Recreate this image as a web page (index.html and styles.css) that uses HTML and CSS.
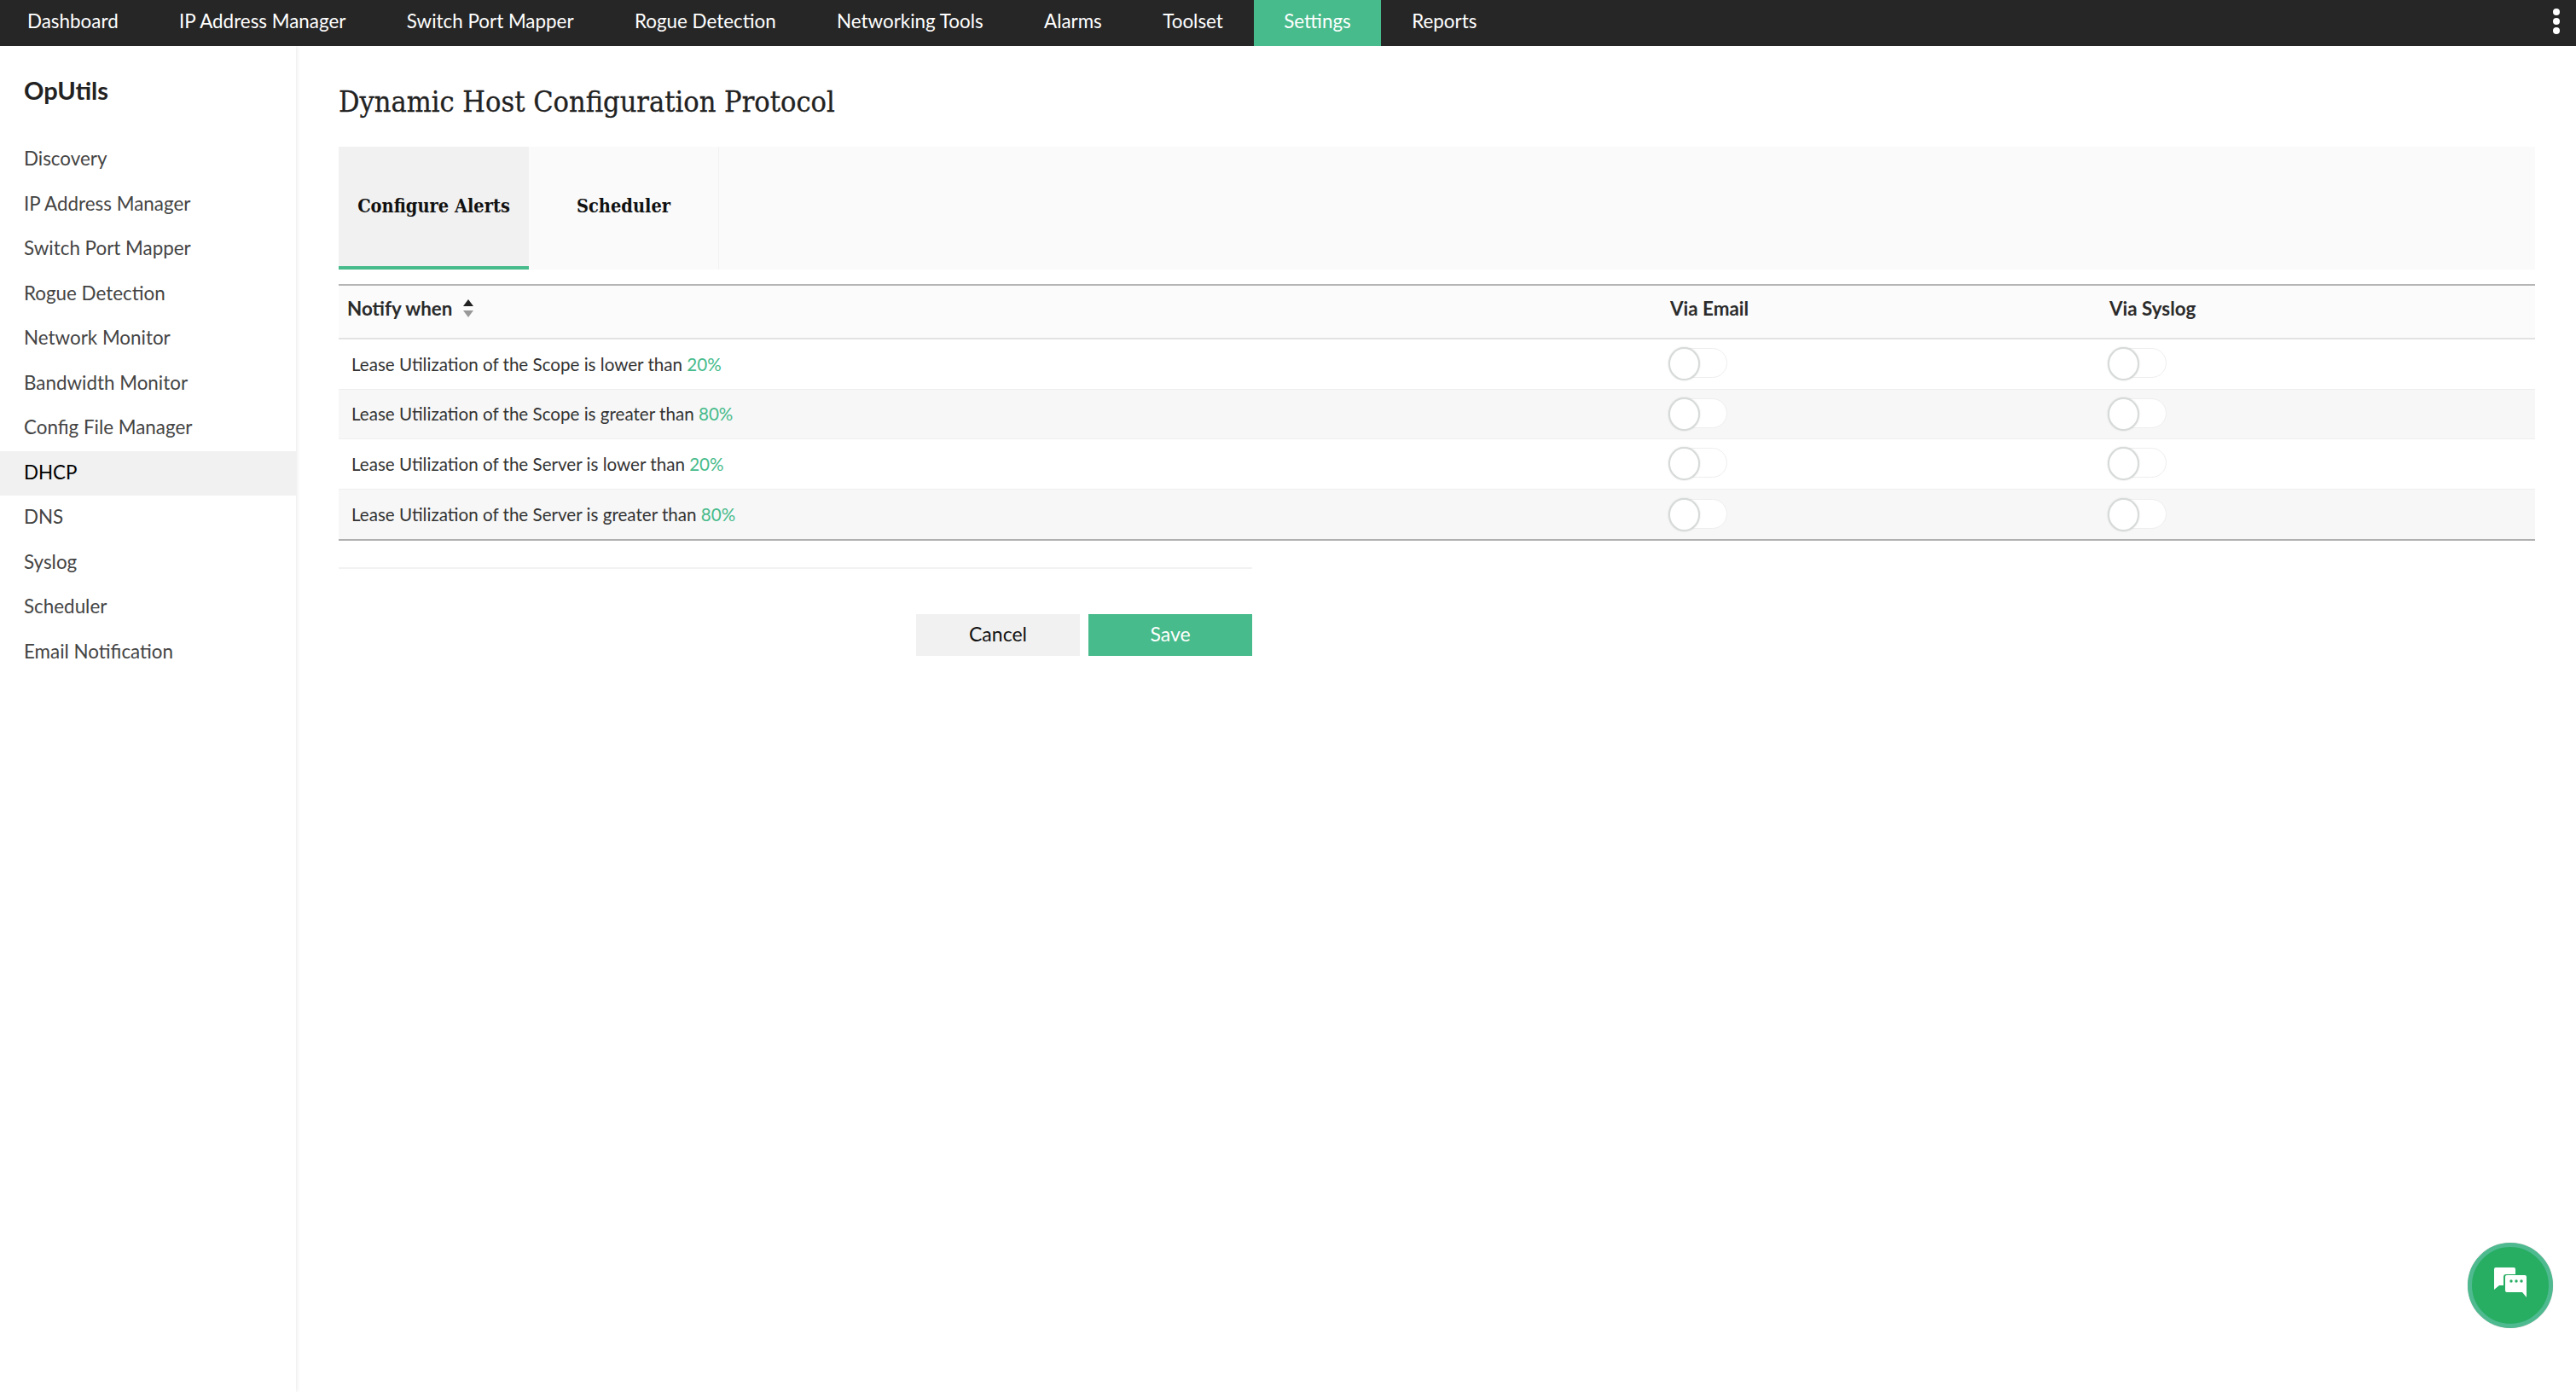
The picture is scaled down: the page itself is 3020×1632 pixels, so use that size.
FILE: index.html
```html
<!doctype html>
<html>
<head>
<meta charset="utf-8">
<title>Dynamic Host Configuration Protocol</title>
<link rel="stylesheet" href="styles.css">
</head>

<body>

<div class="topbar">
    <a href="javascript:;">Dashboard</a>
    <a href="javascript:;">IP Address Manager</a>
    <a href="javascript:;">Switch Port Mapper</a>
    <a href="javascript:;">Rogue Detection</a>
    <a href="javascript:;">Networking Tools</a>
    <a href="javascript:;">Alarms</a>
    <a href="javascript:;">Toolset</a>
    <a href="javascript:;" class="ac">Settings</a>
    <a href="javascript:;">Reports</a>
    <span class="more"><i></i><i></i><i></i></span>
</div>

<div class="wrap">
    <div class="side">
        <h2>OpUtils</h2>
        <ul>
            <li>Discovery</li>
            <li>IP Address Manager</li>
            <li>Switch Port Mapper</li>
            <li>Rogue Detection</li>
            <li>Network Monitor</li>
            <li>Bandwidth Monitor</li>
            <li>Config File Manager</li>
            <li class="ac">DHCP</li>
            <li>DNS</li>
            <li>Syslog</li>
            <li>Scheduler</li>
            <li>Email Notification</li>
        </ul>
    </div>

    <div class="main">
        <h1>Dynamic Host Configuration Protocol</h1>

        <div class="tabs">
            <a href="javascript:;" class="ac">Configure Alerts</a>
            <a href="javascript:;">Scheduler</a>
        </div>

        <div class="grid">
            <div class="row head">
                <div class="name">Notify when <span class="sort"><i class="up"></i><i class="down"></i></span></div>
                <div>Via Email</div>
                <div>Via Syslog</div>
            </div>
            <div class="row">
                <div class="name">Lease Utilization of the Scope is lower than <em>20%</em></div>
                <div><span class="toggle"></span></div>
                <div><span class="toggle"></span></div>
            </div>
            <div class="row">
                <div class="name">Lease Utilization of the Scope is greater than <em>80%</em></div>
                <div><span class="toggle"></span></div>
                <div><span class="toggle"></span></div>
            </div>
            <div class="row">
                <div class="name">Lease Utilization of the Server is lower than <em>20%</em></div>
                <div><span class="toggle"></span></div>
                <div><span class="toggle"></span></div>
            </div>
            <div class="row">
                <div class="name">Lease Utilization of the Server is greater than <em>80%</em></div>
                <div><span class="toggle"></span></div>
                <div><span class="toggle"></span></div>
            </div>
        </div>

        <div class="actions">
            <a href="javascript:;" class="btn">Cancel</a>
            <a href="javascript:;" class="btn save">Save</a>
        </div>
    </div>
</div>

<a href="javascript:;" class="chat">
    <svg width="38" height="35" viewBox="0 0 38 35">
        <path d="M2 0h21a2 2 0 0 1 2 2v6H14a3 3 0 0 0-3 3v10H6l-6 5V2a2 2 0 0 1 2-2z" fill="#fff"/>
        <path d="M15 9h21a2 2 0 0 1 2 2v24l-5-6H15a2 2 0 0 1-2-2V11a2 2 0 0 1 2-2z" fill="#fff"/>
        <circle cx="20" cy="16" r="1.7" fill="#27ae63"/>
        <circle cx="26" cy="16" r="1.7" fill="#27ae63"/>
        <circle cx="32" cy="16" r="1.7" fill="#27ae63"/>
    </svg>
</a>

</body>
</html>
```

FILE: styles.css
```css
*{ padding: 0; margin: 0; box-sizing: border-box; }
a{ text-decoration: none; color: inherit; }
li{ list-style: none; }
html, body{ height: 100%; }
body{ background: #fff; font-family: "Lato", "Noto Sans", sans-serif; font-size: 22.4px; color: #333; overflow: hidden; }

.topbar{ display: flex; height: 54px; padding-left: 32px; background: #262626; color: #fff; position: relative; }
.topbar a{ line-height: 50px; margin-right: 71.4px; }
.topbar a.ac{ background: #47bb8b; padding: 0 35.7px; margin: 0 35.7px 0 -35.7px; }
.topbar .more{ position: absolute; right: 19px; top: 10px; display: flex; flex-direction: column; gap: 3px; }
.topbar .more i{ width: 8px; height: 8px; border-radius: 50%; background: #fff; }

.wrap{ display: flex; height: calc(100% - 54px); }

.side{ width: 347px; flex: none; box-shadow: 1px 0 5px rgba(0,0,0,.09); }
.side h2{ font-size: 29px; font-weight: 700; color: #222; padding: 34px 0 0 28px; height: 107px; line-height: 36px; }
.side li{ height: 52.5px; line-height: 49px; padding-left: 28px; color: #444; }
.side li.ac{ background: #f1f1f1; color: #000; }

.main{ flex: 1; padding: 0 48px 0 50px; }
.main h1{ font-family: "DejaVu Serif Condensed", "DejaVu Serif", serif; font-size: 34px; font-weight: 400; -webkit-text-stroke: .3px #222; color: #222; height: 118px; padding-top: 45px; line-height: 40px; }

.tabs{ display: flex; height: 144px; background: #fafafa; }
.tabs a{ width: 223px; line-height: 140px; text-align: center; border-right: 1px solid #f2f2f2; font-family: "DejaVu Serif Condensed", "DejaVu Serif", serif; font-size: 21.6px; font-weight: 700; color: #111; }
.tabs a.ac{ background: #f1f1f1; border-bottom: 4px solid #47bb8b; border-right: 0; }

.grid{ margin-top: 17px; border-top: 2px solid #b5b5b5; border-bottom: 2px solid #b0b0b0; }
.row{ display: grid; grid-template-columns: 1561px 515px 1fr; height: 58.6px; align-items: center; border-bottom: 1px solid #eee; font-size: 20.6px; }
.row:last-child{ border-bottom: 0; }
.row:nth-child(odd){ background: #f7f7f7; }
.row .name{ padding-left: 15px; }
.row em{ font-style: normal; color: #47bb8b; }

.row.head{ height: 63px; background: #fbfbfb; border-bottom: 2px solid #e2e2e2; font-weight: 700; font-size: 22.4px; color: #2b2b2b; padding-bottom: 9px; }
.row.head .name{ padding-left: 10px; display: flex; align-items: center; gap: 13px; }
.sort{ display: flex; flex-direction: column; gap: 5px; }
.sort i{ width: 0; height: 0; border-left: 6px solid transparent; border-right: 6px solid transparent; }
.sort .up{ border-bottom: 8px solid #222; }
.sort .down{ border-top: 8px solid #999; }

.toggle{ display: block; width: 67px; height: 35px; margin-top: -2px; border: 1px solid #eee; border-radius: 18px; background: #fff; position: relative; }
.toggle:before{ content: ""; position: absolute; left: -3px; top: -2px; width: 33px; height: 35px; border-radius: 50%; background: #fff; border: 2px solid #d6dad8; box-shadow: 0 0 2px rgba(0,0,0,.15); }

.actions{ width: 1071px; margin-top: 31px; padding-top: 53px; border-top: 2px solid #f2f2f2; display: flex; justify-content: flex-end; gap: 10px; }
.btn{ width: 192px; height: 49px; line-height: 47px; text-align: center; background: #f1f1f1; color: #111; font-size: 23px; }
.btn.save{ background: #47bb8b; color: #fff; }

.chat{ position: absolute; left: 2893px; top: 1457px; width: 100px; height: 100px; border-radius: 50%; background: #27ae63; border: 5px solid #4fba90; box-shadow: 0 0 1px #aaa; display: flex; align-items: center; justify-content: center; }
.chat svg{ margin-bottom: 7px; }
```
